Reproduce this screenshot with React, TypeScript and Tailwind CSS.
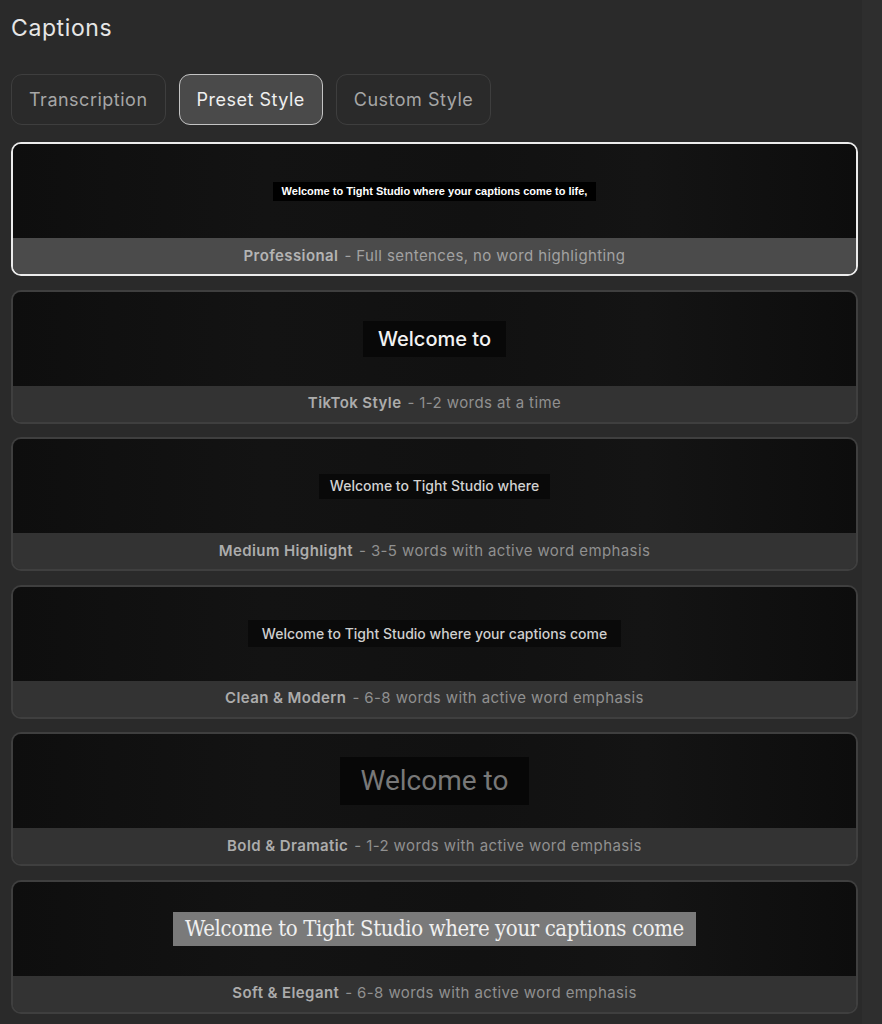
import { useState } from "react"

type Preset = {
    name: string
    desc: string
    sample: string
    chip: string
}

const presets: Preset[] = [
    {
        name: "Professional",
        desc: "Full sentences, no word highlighting",
        sample: "Welcome to Tight Studio where your captions come to life,",
        chip: "bg-black text-white text-[11px] font-semibold px-[9px] h-[19px] font-['Liberation_Sans',sans-serif]",
    },
    {
        name: "TikTok Style",
        desc: "1-2 words at a time",
        sample: "Welcome to",
        chip: "bg-[#080808] text-[#f2f2f2] text-[20px] font-medium px-[15px] h-[36px]",
    },
    {
        name: "Medium Highlight",
        desc: "3-5 words with active word emphasis",
        sample: "Welcome to Tight Studio where",
        chip: "bg-[#090909] text-[#d2d2d2] text-[14px] font-medium px-[11px] h-[25px]",
    },
    {
        name: "Clean & Modern",
        desc: "6-8 words with active word emphasis",
        sample: "Welcome to Tight Studio where your captions come",
        chip: "bg-[#0a0a0a] text-[#cfcfcf] text-[14px] font-medium px-[14px] h-[27px]",
    },
    {
        name: "Bold & Dramatic",
        desc: "1-2 words with active word emphasis",
        sample: "Welcome to",
        chip: "bg-[#070707] text-[#787878] text-[28px] px-[21px] h-[48px] font-['Roboto',sans-serif]",
    },
    {
        name: "Soft & Elegant",
        desc: "6-8 words with active word emphasis",
        sample: "Welcome to Tight Studio where your captions come",
        chip: "bg-[#7a7a7a] text-[#f0f0f0] text-[22px] px-[12px] h-[34px] font-['DejaVu_Serif_Condensed','Liberation_Serif',serif] tracking-[-0.4px]",
    },
]

const tabs = ["Transcription", "Preset Style", "Custom Style"]

function PresetCard({ preset, selected, onClick }: { preset: Preset; selected: boolean; onClick: () => void }) {
    return (
        <button
            onClick={onClick}
            className={`flex flex-col w-[847px] h-[134px] rounded-[10px] border-2 overflow-hidden text-left ${
                selected ? "border-[#ececec]" : "border-[#3f3f3f]"
            }`}
        >
            {/* Preview */}
            <div className="h-[94px] w-full flex items-center justify-center bg-[linear-gradient(90deg,#0e0e0e_0%,#131313_30%,#111111_55%,#141414_75%,#0d0d0d_100%)]">
                <span className={`flex items-center whitespace-nowrap leading-none ${preset.chip}`}>
                    {preset.sample}
                </span>
            </div>

            {/* Label */}
            <div
                className={`flex-1 w-full flex items-center justify-center text-[15px] tracking-[0.4px] ${
                    selected ? "bg-[#4b4b4b]" : "bg-[#333333]"
                }`}
            >
                <span className={`font-semibold ${selected ? "text-[#b4b4b4]" : "text-[#acacac]"}`}>
                    {preset.name}
                </span>
                <span className={`ml-[6px] ${selected ? "text-[#a2a2a2]" : "text-[#909090]"}`}>
                    - {preset.desc}
                </span>
            </div>
        </button>
    )
}

export default function App() {
    const [tab, setTab] = useState("Preset Style")
    const [selected, setSelected] = useState(0)

    return (
        <div className="flex w-[882px] h-[1024px] overflow-hidden bg-[#2a2a2a] font-['Inter',sans-serif]">
            <div className="flex flex-col w-[862px] pl-[11px] pt-[13px]">
                <h1 className="text-[23px] text-[#e6e6e6] leading-[30px] tracking-[0.6px]">Captions</h1>

                {/* Tabs */}
                <div className="flex gap-[13px] mt-[31px]">
                    {tabs.map((t) => (
                        <button
                            key={t}
                            onClick={() => setTab(t)}
                            className={`h-[51px] px-[17px] rounded-[11px] text-[18px] tracking-[0.5px] ${
                                tab === t
                                    ? "bg-[#4a4a4a] border-[1.5px] border-[#c4c4c4] text-[#efefef]"
                                    : "border-[1.5px] border-[#3e3e3e] text-[#a6a6a6]"
                            }`}
                        >
                            {t}
                        </button>
                    ))}
                </div>

                {/* Presets */}
                <div className="flex flex-col gap-[13.5px] mt-[17px]">
                    {presets.map((p, i) => (
                        <PresetCard key={p.name} preset={p} selected={selected === i} onClick={() => setSelected(i)} />
                    ))}
                </div>
            </div>

            {/* Scroll track */}
            <div className="flex-1 bg-[#2e2e2e]" />
        </div>
    )
}
